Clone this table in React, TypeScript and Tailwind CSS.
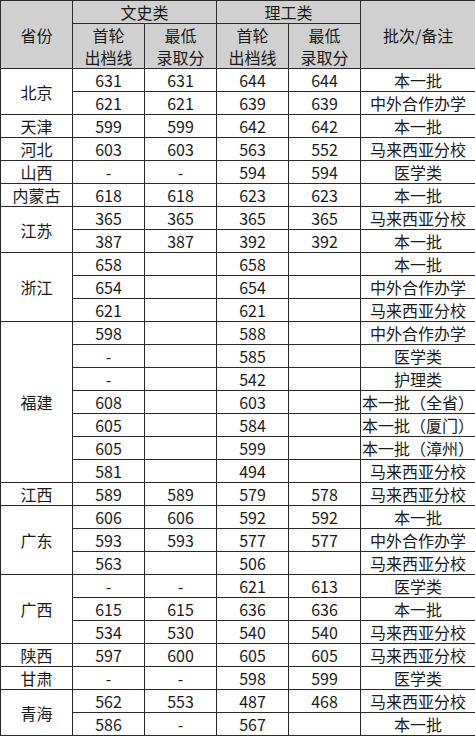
type Row = [string, string, string, string, string];

const groups: { name: string; rows: Row[] }[] = [
  { name: "北京", rows: [["631", "631", "644", "644", "本一批"], ["621", "621", "639", "639", "中外合作办学"]] },
  { name: "天津", rows: [["599", "599", "642", "642", "本一批"]] },
  { name: "河北", rows: [["603", "603", "563", "552", "马来西亚分校"]] },
  { name: "山西", rows: [["-", "-", "594", "594", "医学类"]] },
  { name: "内蒙古", rows: [["618", "618", "623", "623", "本一批"]] },
  { name: "江苏", rows: [["365", "365", "365", "365", "马来西亚分校"], ["387", "387", "392", "392", "本一批"]] },
  {
    name: "浙江",
    rows: [
      ["658", "", "658", "", "本一批"],
      ["654", "", "654", "", "中外合作办学"],
      ["621", "", "621", "", "马来西亚分校"],
    ],
  },
  {
    name: "福建",
    rows: [
      ["598", "", "588", "", "中外合作办学"],
      ["-", "", "585", "", "医学类"],
      ["-", "", "542", "", "护理类"],
      ["608", "", "603", "", "本一批（全省）"],
      ["605", "", "584", "", "本一批（厦门）"],
      ["605", "", "599", "", "本一批（漳州）"],
      ["581", "", "494", "", "马来西亚分校"],
    ],
  },
  { name: "江西", rows: [["589", "589", "579", "578", "马来西亚分校"]] },
  {
    name: "广东",
    rows: [
      ["606", "606", "592", "592", "本一批"],
      ["593", "593", "577", "577", "中外合作办学"],
      ["563", "", "506", "", "马来西亚分校"],
    ],
  },
  {
    name: "广西",
    rows: [
      ["-", "-", "621", "613", "医学类"],
      ["615", "615", "636", "636", "本一批"],
      ["534", "530", "540", "540", "马来西亚分校"],
    ],
  },
  { name: "陕西", rows: [["597", "600", "605", "605", "马来西亚分校"]] },
  { name: "甘肃", rows: [["-", "-", "598", "599", "医学类"]] },
  { name: "青海", rows: [["562", "553", "487", "468", "马来西亚分校"], ["586", "-", "567", "", "本一批"]] },
];

const cell = "border border-[#2a2a2a] text-center align-middle p-0 whitespace-nowrap";

export default function App() {
  return (
    <div
      className="w-[475px] h-[736px] bg-white text-[#1a1a1a] overflow-hidden"
      style={{ fontFamily: '"Noto Sans CJK SC", "Noto Sans", sans-serif' }}
    >
      <table className="w-[475px] table-fixed border-collapse text-[16px] leading-[22px]">
        <colgroup>
          <col className="w-[72px]" />
          <col className="w-[72px]" />
          <col className="w-[72px]" />
          <col className="w-[72px]" />
          <col className="w-[72px]" />
          <col className="w-[115px]" />
        </colgroup>
        <thead className="bg-[#d0d0d0]">
          <tr className="h-[22px]">
            <th rowSpan={2} className={`${cell} font-normal`}>省份</th>
            <th colSpan={2} className={`${cell} font-normal`}>文史类</th>
            <th colSpan={2} className={`${cell} font-normal`}>理工类</th>
            <th rowSpan={2} className={`${cell} font-normal`}>批次/备注</th>
          </tr>
          <tr className="h-[44px]">
            <th className={`${cell} font-normal`}>首轮<br />出档线</th>
            <th className={`${cell} font-normal`}>最低<br />录取分</th>
            <th className={`${cell} font-normal`}>首轮<br />出档线</th>
            <th className={`${cell} font-normal`}>最低<br />录取分</th>
          </tr>
        </thead>
        <tbody>
          {groups.map((g) =>
            g.rows.map((r, i) => (
              <tr key={g.name + i} className="h-[23px]">
                {i === 0 && (
                  <td rowSpan={g.rows.length} className={cell}>
                    {g.name}
                  </td>
                )}
                {r.map((v, j) => (
                  <td key={j} className={cell}>
                    {v}
                  </td>
                ))}
              </tr>
            ))
          )}
        </tbody>
      </table>
    </div>
  );
}
